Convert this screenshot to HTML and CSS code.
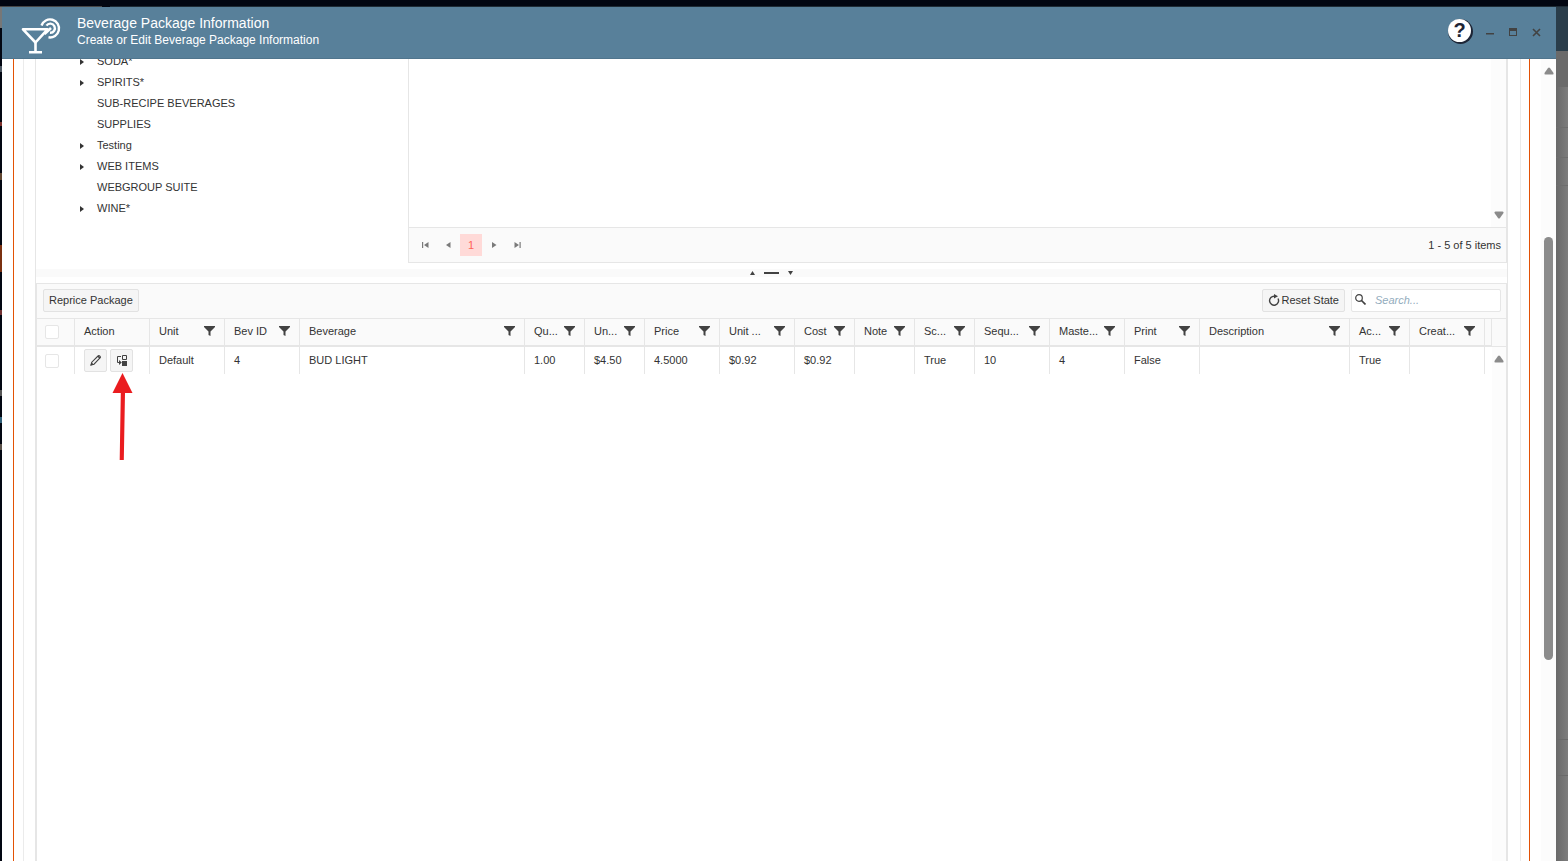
FILE: index.html
```html
<!DOCTYPE html>
<html lang="en">
<head>
    <meta charset="UTF-8">
    <meta name="viewport" content="width=device-width, initial-scale=1.0">
    <title>Beverage Package Information</title>
    <link rel="stylesheet" href="styles.css">
</head>
<body>
    <svg class="symbols" aria-hidden="true">
        <symbol id="filter" viewBox="0 0 11 10">
            <path d="M0 0h11v1L6.500 5.500V10L4.500 9V5.500L0 1z"/>
        </symbol>
        <symbol id="up" viewBox="0 0 10 8">
            <path d="M4 1Q5 0 6 1L9.500 6Q10 7.500 8.500 7.500H1.500Q0 7.500 .5 6z"/>
        </symbol>
    </svg>

    <div class="page-top"></div>
    <div class="page">
        <div class="page-left"></div>
        <main class="window">
            <header class="titlebar">
                <svg class="logo" width="42" height="37" viewBox="0 0 42 37">
                    <g fill="none" stroke="#fff" stroke-width="2.600">
                        <path d="M3 12.300H27.500L15.500 25.500z" stroke-linejoin="round"/>
                        <path d="M15.500 25V35M9 35.200H22"/>
                        <path d="M21.500 8.500A9 9 0 1 1 28.500 20.300" stroke-width="2.400"/>
                        <path d="M26.500 8.600A4.600 4.600 0 1 1 30 15.800" stroke-width="2.400"/>
                        <path d="M24.500 17L31 11"/>
                    </g>
                </svg>
                <div class="titles">
                    <h1>Beverage Package Information</h1>
                    <p>Create or Edit Beverage Package Information</p>
                </div>
                <div class="window-actions">
                    <button class="help" aria-label="Help">?</button>
                    <button class="win-btn" aria-label="Minimize"><svg width="9" height="9"><path d="M0 5h8v1.500H0z"/></svg></button>
                    <button class="win-btn" aria-label="Maximize"><svg width="9" height="9"><path d="M0 0h8v8H0zM1 3v4h6V3z" fill-rule="evenodd"/></svg></button>
                    <button class="win-btn" aria-label="Close"><svg width="9" height="9"><path d="M1 1L8 8M8 1L1 8" stroke="#424242" stroke-width="1.600"/></svg></button>
                </div>
            </header>

            <div class="content">
                <div class="outer">
                    <div class="middle">
                        <div class="inner">
                            <section class="top-pane">
                                <ul class="tree">
                                    <li class="parent">SODA*</li>
                                    <li class="parent">SPIRITS*</li>
                                    <li>SUB-RECIPE BEVERAGES</li>
                                    <li>SUPPLIES</li>
                                    <li class="parent">Testing</li>
                                    <li class="parent">WEB ITEMS</li>
                                    <li>WEBGROUP SUITE</li>
                                    <li class="parent">WINE*</li>
                                </ul>
                                <div class="items">
                                    <div class="items-body">
                                        <div class="gutter bottom"><svg class="flip" width="10" height="8"><use href="#up"/></svg></div>
                                    </div>
                                    <nav class="pager">
                                        <button aria-label="First page"><svg width="7" height="6"><path d="M0 0h1.200v6H0zM6.500 0v6L2 3z"/></svg></button>
                                        <button aria-label="Previous page"><svg width="7" height="6"><path d="M5.500 0v6L1 3z"/></svg></button>
                                        <button class="current">1</button>
                                        <button aria-label="Next page"><svg width="7" height="6"><path d="M1 0v6L5.500 3z"/></svg></button>
                                        <button aria-label="Last page"><svg width="7" height="6"><path d="M5.500 0h1.200v6H5.500zM.5 0v6L5 3z"/></svg></button>
                                        <span class="pager-info">1 - 5 of 5 items</span>
                                    </nav>
                                </div>
                            </section>

                            <div class="splitter">
                                <svg width="43" height="6">
                                    <path d="M0 5L2.500 1L5 5zM14 2h15v2H14zM38 1h5L40.500 5z"/>
                                </svg>
                            </div>

                            <section class="grid">
                                <div class="toolbar">
                                    <button class="btn">Reprice Package</button>
                                    <button class="btn reset">
                                        <svg width="12" height="12" viewBox="0 0 12 12"><path d="M6.500 2.200A4.500 4.500 0 1 0 10 4.500" fill="none" stroke="#424242" stroke-width="1.400"/><path d="M6 0l4 2.300L6 4.500z"/></svg>
                                        Reset State
                                    </button>
                                    <label class="search">
                                        <svg width="11" height="11" viewBox="0 0 11 11"><circle cx="4" cy="4" r="3.300" fill="none" stroke="#424242" stroke-width="1.200"/><path d="M6.500 6.500L10.500 10.500" stroke="#424242" stroke-width="1.700"/></svg>
                                        <input type="text" placeholder="Search..." aria-label="Search">
                                    </label>
                                </div>
                                <div class="grid-body">
                                    <table>
                                        <colgroup>
                                            <col class="c-check"><col class="c-m"><col class="c-m"><col class="c-m"><col>
                                            <col class="c-s"><col class="c-s"><col class="c-m"><col class="c-m">
                                            <col class="c-s"><col class="c-s"><col class="c-s"><col class="c-m">
                                            <col class="c-m"><col class="c-m"><col class="c-l"><col class="c-s">
                                            <col class="c-m"><col class="c-end">
                                        </colgroup>
                                        <thead>
                                            <tr>
                                                <th><input type="checkbox" aria-label="Select all"></th>
                                                <th>Action</th>
                                                <th><div>Unit<svg><use href="#filter"/></svg></div></th>
                                                <th><div>Bev ID<svg><use href="#filter"/></svg></div></th>
                                                <th><div>Beverage<svg><use href="#filter"/></svg></div></th>
                                                <th><div>Qu...<svg><use href="#filter"/></svg></div></th>
                                                <th><div>Un...<svg><use href="#filter"/></svg></div></th>
                                                <th><div>Price<svg><use href="#filter"/></svg></div></th>
                                                <th><div>Unit ...<svg><use href="#filter"/></svg></div></th>
                                                <th><div>Cost<svg><use href="#filter"/></svg></div></th>
                                                <th><div>Note<svg><use href="#filter"/></svg></div></th>
                                                <th><div>Sc...<svg><use href="#filter"/></svg></div></th>
                                                <th><div>Sequ...<svg><use href="#filter"/></svg></div></th>
                                                <th><div>Maste...<svg><use href="#filter"/></svg></div></th>
                                                <th><div>Print<svg><use href="#filter"/></svg></div></th>
                                                <th><div>Description<svg><use href="#filter"/></svg></div></th>
                                                <th><div>Ac...<svg><use href="#filter"/></svg></div></th>
                                                <th><div>Creat...<svg><use href="#filter"/></svg></div></th>
                                                <th></th>
                                            </tr>
                                        </thead>
                                        <tbody>
                                            <tr>
                                                <td><input type="checkbox" aria-label="Select BUD LIGHT"></td>
                                                <td>
                                                    <div class="row-actions">
                                                        <button class="btn icon" aria-label="Edit"><svg width="11" height="11" viewBox="0 0 11 11"><path d="M1 10l.8-2.800L8 1Q9 .3 9.900 1.200T10 3L4 9.200z" fill="none" stroke="#424242" stroke-width="1.100"/><path d="M.5 10.500l1-3.200 2.200 2.200zM7.300 1.500l2.200 2.200 1-1-2.200-2.200z"/></svg></button>
                                                        <button class="btn icon" aria-label="Change package">
                                                            <svg width="12" height="12" viewBox="0 0 12 12"><path d="M6.500 1.500h4v4h-4zM5 2.500H1.500v6H4" fill="none" stroke="#424242"/><path d="M6 7h5v5H6zM3 6l2.800 2.500L3 11z"/></svg>
                                                            <svg class="arrow" width="22" height="88" viewBox="0 0 22 88"><path d="M11.500 0L21.500 20H14L12.800 87H8.700L9.800 20H1.500z"/></svg>
                                                        </button>
                                                    </div>
                                                </td>
                                                <td>Default</td>
                                                <td>4</td>
                                                <td>BUD LIGHT</td>
                                                <td>1.00</td>
                                                <td>$4.50</td>
                                                <td>4.5000</td>
                                                <td>$0.92</td>
                                                <td>$0.92</td>
                                                <td></td>
                                                <td>True</td>
                                                <td>10</td>
                                                <td>4</td>
                                                <td>False</td>
                                                <td></td>
                                                <td>True</td>
                                                <td></td>
                                                <td></td>
                                            </tr>
                                        </tbody>
                                    </table>
                                    <div class="grid-scroll">
                                        <div class="gutter-head"></div>
                                        <div class="gutter"><svg width="10" height="8"><use href="#up"/></svg></div>
                                    </div>
                                </div>
                            </section>
                        </div>
                    </div>
                </div>
                <div class="scrollbar">
                    <svg width="10" height="8"><use href="#up"/></svg>
                    <div class="before"></div>
                    <div class="thumb"></div>
                    <div class="after"></div>
                </div>
            </div>
        </main>
        <div class="page-right"></div>
    </div>
</body>
</html>
```
FILE: styles.css
```css
* {
    margin: 0;
    padding: 0;
    box-sizing: border-box;
    font-family: "Liberation Sans", Arial, sans-serif;
}

body {
    display: flex;
    flex-direction: column;
    height: 100vh;
    overflow: hidden;
    background: #020611;
    color: #333;
    font-size: 11px;
}

svg {
    display: block;
    flex: none;
    fill: #424242;
}

button {
    border: none;
    background: none;
    color: inherit;
    font-size: 11px;
    cursor: pointer;
}

.symbols {
    position: absolute;
    width: 0;
    height: 0;
}

/* page behind the window */
.page-top {
    height: 7px;
    flex: none;
    background: linear-gradient(90deg, #474747 102px, #020611 102px, #020611 110px, #1e2b35 110px) 0 6px no-repeat;
}

.page {
    flex: 1;
    display: flex;
    min-height: 0;
}

.page-left {
    width: 2px;
    background: linear-gradient(#777 21px, transparent 21px, transparent 59px, #4b5560 59px, #4b5560 65px,
        transparent 65px, transparent 115px, #7c2f2a 115px, #7c2f2a 119px, transparent 119px, transparent 166px,
        #604530 166px, #604530 173px, transparent 173px, transparent 238px, #7a3010 238px, #7a3010 265px,
        transparent 265px, transparent 303px, #703030 303px, #703030 308px, transparent 308px, transparent 383px,
        #555 383px, #555 389px, transparent 389px, transparent 410px, #2f5f78 410px, #2f5f78 416px,
        transparent 416px, transparent 437px, #5a5048 437px, #5a5048 443px, transparent 443px);
}

.page-right {
    width: 12px;
    background: linear-gradient(#2a3d4a 44px, #6a6a6a 44px, #6a6a6a 80px, transparent 80px),
        linear-gradient(transparent 120px, #6e6e6e 120px, #6e6e6e 121px, transparent 121px, transparent 150px,
        #6e6e6e 150px, #6e6e6e 151px, transparent 151px, transparent 178px, #6e6e6e 178px, #6e6e6e 179px,
        transparent 179px, transparent 732px, #6a6a6a 732px, #6a6a6a 733px, transparent 733px,
        transparent 768px, #6a6a6a 768px, #6a6a6a 769px, transparent 769px),
        linear-gradient(90deg, #696969, #7d7d7d);
}

.window {
    flex: 1;
    display: flex;
    flex-direction: column;
    min-width: 0;
    background: #fff;
}

.titlebar {
    display: flex;
    flex: none;
    height: 52px;
    padding: 8px 15px 0 18px;
    background: #58809a;
    border-bottom: 1px solid #50758d;
    color: #fff;
}

.logo {
    margin-top: 2px;
}

.titles {
    padding-left: 15px;
}

.titles h1 {
    font-size: 14px;
    font-weight: normal;
    line-height: 17px;
}

.titles p {
    font-size: 12px;
    line-height: 16px;
}

.window-actions {
    display: flex;
    gap: 14px;
    height: 34px;
    align-items: center;
    margin-left: auto;
}

.help {
    width: 23px;
    height: 23px;
    margin: 0 1px 3px 0;
    border-radius: 50%;
    background: #fff;
    box-shadow: 1px 1px 0 1px #1d2536;
    color: #1d2536;
    font-size: 20px;
    font-weight: bold;
    line-height: 23px;
}

.win-btn {
    width: 9px;
    height: 9px;
}

.content {
    flex: 1;
    display: flex;
    min-height: 0;
}

/* nested frames around the working area */
.outer {
    flex: 1;
    display: flex;
    min-width: 0;
    margin: 0 11px;
    padding: 0 8px 0 9px;
    border: solid #e35205;
    border-width: 0 1px;
}

.middle {
    flex: 1;
    display: flex;
    min-width: 0;
    padding: 0 12px 0 11px;
    border: solid #ebebeb;
    border-width: 0 1px;
}

.inner {
    flex: 1;
    display: flex;
    flex-direction: column;
    min-width: 0;
    border: solid #e6e6e6;
    border-width: 0 1px;
}

.top-pane {
    display: flex;
    height: 204px;
    flex: none;
    overflow: hidden;
}

.tree {
    width: 372px;
    margin-top: -8px;
    padding-left: 61px;
    list-style: none;
}

.tree li {
    position: relative;
    line-height: 21px;
}

.tree .parent::before {
    content: "";
    position: absolute;
    left: -17px;
    top: 8px;
    border: solid transparent;
    border-width: 3px 0 3px 4px;
    border-left-color: #333;
}

.items {
    flex: 1;
    display: flex;
    flex-direction: column;
    border: solid #e6e6e6;
    border-width: 0 1px 1px;
}

.items-body {
    flex: 1;
    display: flex;
    justify-content: flex-end;
}

.gutter {
    display: flex;
    flex: 1;
    justify-content: center;
    width: 15px;
    padding: 8px 0;
    background: #fcfcfc;
}

.gutter.bottom {
    flex: none;
    align-items: flex-end;
}

.gutter svg,
.scrollbar svg {
    fill: #8b8b8b;
}

.flip {
    transform: rotate(180deg);
}

.pager {
    display: flex;
    align-items: center;
    gap: 1px;
    height: 35px;
    padding: 0 5px 1px;
    background: #fafafa;
    border-top: 1px solid #e6e6e6;
}

.pager button {
    display: flex;
    align-items: center;
    justify-content: center;
    width: 22px;
    height: 22px;
}

.pager svg {
    fill: #7a7a7a;
}

.pager .current {
    background: #ffdad8;
    color: #ff6358;
}

.pager-info {
    margin-left: auto;
}

.splitter {
    display: flex;
    justify-content: center;
    align-items: center;
    flex: none;
    height: 8px;
    margin: 6px 0;
    background: #fafafa;
}

/* package grid */
.grid {
    flex: 1;
    display: flex;
    flex-direction: column;
    border: solid #e6e6e6;
    border-width: 1px 1px 0;
}

.toolbar {
    display: flex;
    gap: 6px;
    height: 34px;
    padding: 5px 5px 0 6px;
    background: #fafafa;
}

.btn {
    display: flex;
    align-items: center;
    justify-content: center;
    gap: 2px;
    height: 23px;
    padding: 0 5px 2px;
    border: 1px solid #e2e2e2;
    border-radius: 2px;
    background: #f5f5f5;
}

.btn.reset {
    margin-left: auto;
}

.btn.icon {
    position: relative;
    width: 23px;
    padding: 0;
}

.search {
    display: flex;
    align-items: center;
    gap: 9px;
    width: 150px;
    height: 23px;
    padding: 0 3px 2px;
    border: 1px solid #e6e6e6;
    border-radius: 2px;
    background: #fff;
}

.search input {
    flex: 1;
    min-width: 0;
    border: none;
    outline: none;
    font-size: 11px;
}

.search input::placeholder {
    color: #93acbd;
    font-style: italic;
}

.grid-body {
    flex: 1;
    display: flex;
}

table {
    flex: 1;
    width: 100%;
    min-width: 0;
    table-layout: fixed;
    border-spacing: 0;
    align-self: flex-start;
}

.c-check {
    width: 38px;
}

.c-s {
    width: 60px;
}

.c-m {
    width: 75px;
}

.c-l {
    width: 150px;
}

.c-end {
    width: 7px;
}

th {
    height: 29px;
    padding: 0 9px 2px;
    background: #fafafa;
    border: solid #e6e6e6;
    border-width: 1px 1px 2px 0;
    font-weight: normal;
    text-align: left;
    white-space: nowrap;
}

th:last-child,
td:last-child {
    padding: 0;
}

th div {
    display: flex;
    align-items: center;
    justify-content: space-between;
}

th svg {
    width: 11px;
    height: 10px;
}

td {
    height: 27px;
    padding: 0 9px 1px;
    border-right: 1px solid #e6e6e6;
}

td:last-child {
    border-right: none;
}

th:first-child,
td:first-child {
    padding: 0 8px;
}

input[type="checkbox"] {
    display: block;
    appearance: none;
    width: 14px;
    height: 14px;
    border: 1px solid #e6e6e6;
    border-radius: 2px;
    background: #fff;
}

.row-actions {
    display: flex;
    gap: 3px;
}

.grid-scroll {
    display: flex;
    flex-direction: column;
    width: 14px;
}

.gutter-head {
    height: 29px;
    background: #fafafa;
    border: solid #e6e6e6;
    border-width: 1px 0;
}

.grid-scroll .gutter {
    width: 14px;
}

/* pointer below the second row action */
.arrow {
    position: absolute;
    left: 0;
    top: 23px;
    fill: #ea1c1f;
    pointer-events: none;
}

.scrollbar {
    display: flex;
    flex-direction: column;
    align-items: center;
    width: 15px;
    padding-top: 8px;
    background: #fcfcfc;
}

.before {
    flex: 162;
}

.thumb {
    flex: 423;
    width: 9px;
    border-radius: 5px;
    background: #8b8b8b;
}

.after {
    flex: 201;
}
```
